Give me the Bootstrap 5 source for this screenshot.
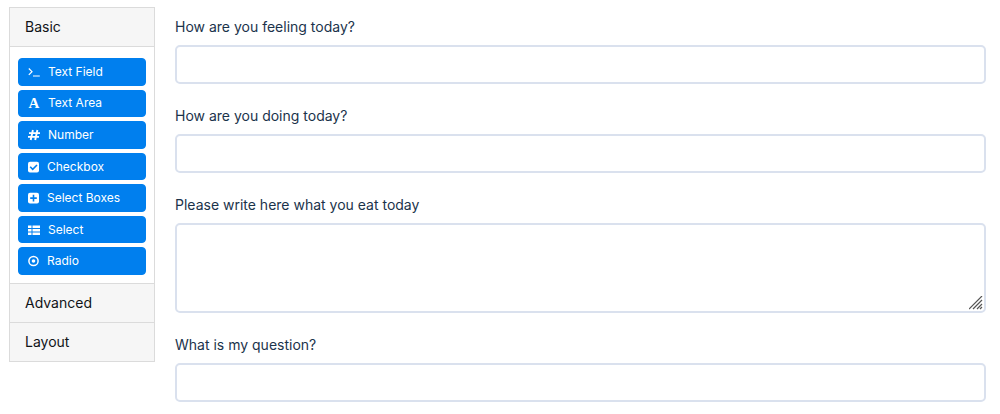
<!DOCTYPE html>
<html lang="en">
<head>
<meta charset="utf-8">
<meta name="viewport" content="width=device-width, initial-scale=1">
<title>Form builder</title>
<link href="https://cdn.jsdelivr.net/npm/bootstrap@5.3.0/dist/css/bootstrap.min.css" rel="stylesheet">
<style>
  body { font-family: Inter, "Liberation Sans", sans-serif; font-size: 14px; line-height: 24px; color: #1b334b; background: #fff; }
  .builder { padding: 7px 14px 12px 9px; gap: 20px; }
  .palette { width: 146px; border: 1px solid #dbdbdb; color: #111418; }
  .group-toggle { padding: 7px 15px; background: #f6f6f6; border: 0; color: inherit; text-align: left; }
  .group-toggle + .group-toggle, .tools + .group-toggle { border-top: 1px solid #dbdbdb; }
  .tools { padding: 11px 8px 8px; border-top: 1px solid #dbdbdb; }
  .tool-list { min-height: 217px; }
  .tool { --bs-btn-bg: #007fee; --bs-btn-border-color: #007fee; --bs-btn-color: #fff; --bs-btn-hover-bg: #006fd0; --bs-btn-hover-color: #fff;
    --bs-btn-padding-x: 9px; --bs-btn-padding-y: 0px; --bs-btn-font-size: 12px; --bs-btn-font-weight: 400; --bs-btn-line-height: 16px; --bs-btn-border-radius: 4px; gap: 8px; }
  .tool svg { height: 12px; width: 12px; flex: none; }
  .tool svg.square { width: 11px; }
  .letter { width: 12px; font: bold 15px/16px "Liberation Serif", serif; text-align: center; }
  .fields { padding-top: 8px; gap: 20px; min-width: 0; }
  .fields .form-label { margin-bottom: 6px; }
  .fields .form-control { display: block; border: 2px solid #dae1ee; border-radius: 5px; height: 39px; }
  .fields textarea.form-control { height: 90px; resize: vertical; }
  textarea::-webkit-resizer { background: url("data:image/svg+xml,%3Csvg xmlns='http://www.w3.org/2000/svg' width='15' height='15'%3E%3Cpath d='M0 13L13 0M4 13L13 4M8 13L13 8M11 13L13 11' stroke='%23555' stroke-width='1.200'/%3E%3C/svg%3E") no-repeat right bottom; }
</style>
<script src="https://cdn.jsdelivr.net/npm/bootstrap@5.3.0/dist/js/bootstrap.bundle.min.js" defer></script>
</head>
<body>
<div class="builder d-flex align-items-start">
  <aside class="palette flex-shrink-0 d-flex flex-column">
    <button type="button" class="group-toggle" data-bs-toggle="collapse" data-bs-target="#basic" aria-expanded="true">Basic</button>
    <div id="basic" class="tools collapse show">
      <div class="tool-list d-flex flex-column gap-1">
        <button type="button" class="btn tool flex-fill d-flex align-items-center">
          <svg viewBox="0 0 12 12" fill="none" stroke="currentColor" stroke-width="1.200" aria-hidden="true"><path d="M.8 2.500L4 5.700.8 8.900M5 10h6.800"/></svg>Text Field</button>
        <button type="button" class="btn tool flex-fill d-flex align-items-center">
          <span class="letter" aria-hidden="true">A</span>Text Area</button>
        <button type="button" class="btn tool flex-fill d-flex align-items-center">
          <svg viewBox="0 0 12 12" fill="none" stroke="currentColor" stroke-width="1.900" aria-hidden="true"><path d="M4.900 1L2.700 11M9.400 1L7.200 11M1 4.100h11M0 7.900h11"/></svg>Number</button>
        <button type="button" class="btn tool flex-fill d-flex align-items-center">
          <svg class="square" viewBox="0 0 11 12" aria-hidden="true"><rect y=".8" width="11" height="10.600" rx="2" fill="currentColor"/><path d="M2.200 5.800l2.500 2.500 4.300-4.300" fill="none" stroke="#007fee" stroke-width="1.600"/></svg>Checkbox</button>
        <button type="button" class="btn tool flex-fill d-flex align-items-center">
          <svg class="square" viewBox="0 0 11 12" aria-hidden="true"><rect y=".8" width="11" height="10.600" rx="2" fill="currentColor"/><path d="M5.500 2.800v6.600M2.200 6.100h6.600" fill="none" stroke="#007fee" stroke-width="1.600"/></svg>Select Boxes</button>
        <button type="button" class="btn tool flex-fill d-flex align-items-center">
          <svg viewBox="0 0 12 12" fill="currentColor" aria-hidden="true"><path d="M0 1.500h3.500v2.500H0zM4.500 1.500H12v2.500H4.500zM0 5h3.500v2.500H0zM4.500 5H12v2.500H4.500zM0 8.500h3.500V11H0zM4.500 8.500H12V11H4.500z"/></svg>Select</button>
        <button type="button" class="btn tool flex-fill d-flex align-items-center">
          <svg class="square" viewBox="0 0 11 12" aria-hidden="true"><circle cx="5.500" cy="6" r="4.600" fill="none" stroke="currentColor" stroke-width="1.500"/><circle cx="5.500" cy="6" r="1.800" fill="currentColor"/></svg>Radio</button>
      </div>
    </div>
    <button type="button" class="group-toggle">Advanced</button>
    <button type="button" class="group-toggle">Layout</button>
  </aside>
  <form class="fields flex-grow-1 d-flex flex-column">
    <div><label class="form-label d-block" for="feeling">How are you feeling today?</label><input class="form-control" type="text" id="feeling"></div>
    <div><label class="form-label d-block" for="doing">How are you doing today?</label><input class="form-control" type="text" id="doing"></div>
    <div><label class="form-label d-block" for="food">Please write here what you eat today</label><textarea class="form-control" id="food"></textarea></div>
    <div><label class="form-label d-block" for="question">What is my question?</label><input class="form-control" type="text" id="question"></div>
  </form>
</div>
</body>
</html>
